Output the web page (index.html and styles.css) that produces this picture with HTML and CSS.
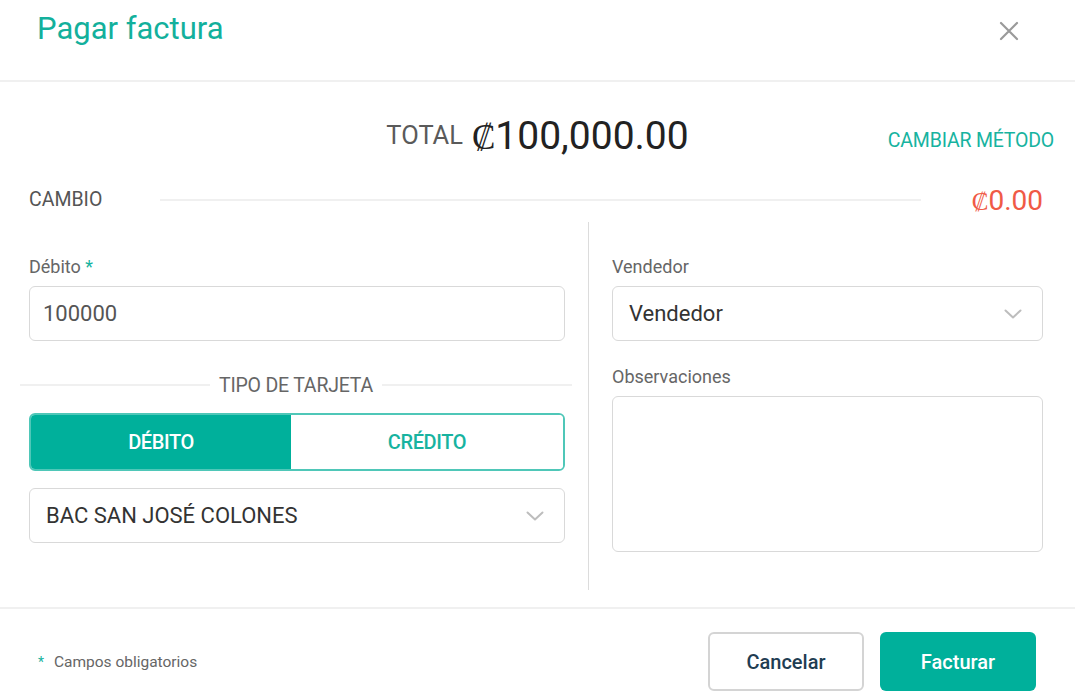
FILE: index.html
```html
<!DOCTYPE html>
<html lang="es">
<head>
<meta charset="utf-8">
<title>Pagar factura</title>
<link rel="stylesheet" href="styles.css">
</head>
<body>
<div class="modal">
  <header class="modal-header">
    <h1 class="modal-title">Pagar factura</h1>
    <button class="close-btn" aria-label="Cerrar">
      <svg width="20" height="20" viewBox="0 0 20 20"><path d="M2 2L18 18M18 2L2 18" stroke="#9a9a9a" stroke-width="2.2" fill="none" stroke-linecap="round"/></svg>
    </button>
  </header>

  <section class="modal-body">
    <div class="total-row">
      <span></span>
      <div class="total">
        <span class="total-label">TOTAL</span>
        <span class="total-amount"><span class="colon">₡</span>100,000.00</span>
      </div>
      <a class="change-method">CAMBIAR MÉTODO</a>
    </div>

    <div class="cambio-row">
      <span class="cambio-label">CAMBIO</span>
      <span class="cambio-line"></span>
      <span class="cambio-amount"><span class="colon">₡</span>0.00</span>
    </div>

    <div class="columns">
      <div class="col-left">
        <label class="field-label">Débito <span class="req">*</span></label>
        <div class="input">100000</div>

        <div class="section-divider">
          <span class="sd-line"></span>
          <span class="sd-text">TIPO DE TARJETA</span>
          <span class="sd-line"></span>
        </div>

        <div class="toggle">
          <div class="toggle-opt active">DÉBITO</div>
          <div class="toggle-opt">CRÉDITO</div>
        </div>

        <div class="select select-bank">
          <span>BAC SAN JOSÉ COLONES</span>
          <svg class="chev" width="18" height="10" viewBox="0 0 18 10"><path d="M1.5 1.5L9 8.5L16.5 1.5" stroke="#bdbdbd" stroke-width="2" fill="none" stroke-linecap="round" stroke-linejoin="round"/></svg>
        </div>
      </div>

      <div class="col-divider"></div>

      <div class="col-right">
        <label class="field-label">Vendedor</label>
        <div class="select">
          <span>Vendedor</span>
          <svg class="chev" width="18" height="10" viewBox="0 0 18 10"><path d="M1.5 1.5L9 8.5L16.5 1.5" stroke="#bdbdbd" stroke-width="2" fill="none" stroke-linecap="round" stroke-linejoin="round"/></svg>
        </div>
        <label class="field-label obs-label">Observaciones</label>
        <div class="textarea"></div>
      </div>
    </div>
  </section>

  <footer class="modal-footer">
    <div class="required-note"><span class="req">*</span> Campos obligatorios</div>
    <div class="actions">
      <button class="btn btn-cancel">Cancelar</button>
      <button class="btn btn-primary">Facturar</button>
    </div>
  </footer>
</div>
</body>
</html>
```

FILE: styles.css
```css
* { box-sizing: border-box; }

html, body {
  margin: 0;
  padding: 0;
  background: #ffffff;
}

body {
  font-family: Roboto, "Liberation Sans", Arial, sans-serif;
  color: #333;
}

.modal {
  width: 1075px;
  height: 695px;
  overflow: hidden;
}

.modal-header {
  height: 82px;
  border-bottom: 2px solid #f0f0f0;
  display: flex;
  justify-content: space-between;
  align-items: flex-start;
  padding: 9px 56px 0 37px;
}

.modal-title {
  margin: 0;
  font-size: 31px;
  line-height: 40px;
  font-weight: 400;
  color: #13b09c;
}

.close-btn {
  background: none;
  border: none;
  padding: 0;
  margin-top: 12px;
  width: 20px;
  height: 20px;
  display: flex;
}

.modal-body {
  padding: 29px 0 0 0;
}

.total-row {
  display: grid;
  grid-template-columns: 1fr auto 1fr;
  align-items: center;
  padding: 0 21px;
  height: 50px;
}

.total {
  display: flex;
  align-items: center;
  gap: 9px;
}

.total-label {
  font-size: 25.5px;
  color: #5a5a5a;
  margin-top: -3px;
}

.total-amount {
  font-size: 39px;
  color: #222;
}

.colon {
  font-family: "DejaVu Serif", "Liberation Serif", serif;
  font-weight: 300;
}

.total-amount .colon {
  font-size: 35px;
}

.change-method {
  justify-self: end;
  font-size: 19.5px;
  color: #17b3a0;
  margin-top: 8px;
  letter-spacing: -0.2px;
}

.cambio-row {
  display: flex;
  align-items: center;
  height: 30px;
  margin-top: 24px;
  padding: 0 32px 0 29px;
}

.cambio-label {
  font-size: 19.5px;
  color: #555;
  width: 131px;
  margin-top: -2px;
}

.cambio-line {
  flex: 1;
  height: 2px;
  background: #f0f0f0;
}

.cambio-amount {
  width: 122px;
  text-align: right;
  font-size: 28px;
  color: #f05a46;
}

.cambio-amount .colon {
  font-size: 25px;
}

.columns {
  display: grid;
  grid-template-columns: 536px 1px 1fr;
  column-gap: 23px;
  margin-top: 7px;
  padding: 0 32px 0 29px;
}

.col-left {
  padding: 34px 0 47px 0;
  display: flex;
  flex-direction: column;
}

.col-right {
  padding: 34px 0 0 0;
  display: flex;
  flex-direction: column;
}

.col-divider {
  background: #dcdcdc;
}

.field-label {
  display: block;
  font-size: 18px;
  line-height: 22px;
  color: #666;
  margin-bottom: 8px;
}

.req {
  color: #17b3a0;
}

.input,
.select {
  height: 55px;
  border: 1px solid #d9d9d9;
  border-radius: 6px;
  display: flex;
  align-items: center;
  font-size: 22px;
}

.input {
  padding-left: 13px;
  color: #555;
}

.select {
  justify-content: space-between;
  padding: 0 20px 0 16px;
  color: #333;
}

.select-bank {
  margin-top: 17px;
  font-size: 22px;
}

.section-divider {
  display: flex;
  align-items: center;
  height: 24px;
  margin: 32px -7px 0 -9px;
  gap: 9px;
}

.sd-line {
  flex: 1;
  height: 2px;
  background: #f0f0f0;
}

.sd-text {
  font-size: 19.5px;
  color: #666;
  letter-spacing: -0.2px;
}

.toggle {
  margin-top: 16px;
  height: 58px;
  display: grid;
  grid-template-columns: 260px 1fr;
  border: 2px solid #4fc7b8;
  border-radius: 6px;
  overflow: hidden;
}

.toggle-opt {
  display: flex;
  align-items: center;
  justify-content: center;
  font-size: 20px;
  font-weight: 500;
  color: #17b3a0;
  letter-spacing: -0.4px;
  background: #fff;
}

.toggle-opt.active {
  background: #00b09b;
  color: #ffffff;
}

.obs-label {
  margin-top: 25px;
}

.textarea {
  height: 156px;
  border: 1px solid #d9d9d9;
  border-radius: 6px;
}

.modal-footer {
  margin-top: 17px;
  border-top: 2px solid #f0f0f0;
  padding: 23px 39px 0 38px;
  display: flex;
  justify-content: space-between;
  align-items: center;
}

.required-note {
  font-size: 15.5px;
  color: #666;
}

.required-note .req {
  margin-right: 6px;
  font-size: 14px;
}

.actions {
  display: flex;
  gap: 16px;
}

.btn {
  width: 156px;
  height: 59px;
  border-radius: 6px;
  font-family: Roboto, "Liberation Sans", Arial, sans-serif;
  font-size: 20px;
  font-weight: 500;
  cursor: pointer;
}

.btn-cancel {
  background: #fff;
  border: 2px solid #d4d4d4;
  color: #1f3d52;
}

.btn-primary {
  background: #00b09b;
  border: none;
  color: #ffffff;
}
```
